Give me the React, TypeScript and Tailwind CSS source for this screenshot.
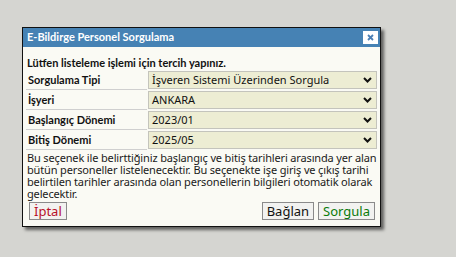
import React from "react";

const font = { fontFamily: '"Noto Sans", "DejaVu Sans", sans-serif' };
const boldFont = { fontFamily: 'Lato, "Noto Sans", sans-serif' };

function Chevron() {
  return (
    <svg width="9" height="6" viewBox="0 0 9 6" className="shrink-0">
      <path d="M1 1 L4.5 4.5 L8 1" stroke="#111" strokeWidth="2" fill="none" />
    </svg>
  );
}

function Row({ label, value }: { label: string; value: string }) {
  return (
    <div className="flex h-[20px] gap-[1px]">
      <div
        className="w-[121px] h-[19px] border-b border-[#cfcfcf] font-bold text-[11px] leading-[18px] pl-[2px] text-[#111]"
        style={boldFont}
      >
        {label}
      </div>
      <div className="flex-1 h-[18px] bg-[#ededd3] border border-[#c4c4bc] flex items-center justify-between pl-[3px] pr-[4px] text-[11px] text-[#111]">
        <span>{value}</span>
        <Chevron />
      </div>
    </div>
  );
}

function Btn({ children, color }: { children: React.ReactNode; color: string }) {
  return (
    <div
      className={`h-[18px] px-[4px] border border-[#8a8a8a] bg-[#f2f2f0] text-[13px] leading-[16px] flex items-center ${color}`}
    >
      {children}
    </div>
  );
}

export default function App() {
  return (
    <div className="w-[456px] h-[257px] bg-[#d5d5d1] pt-[27px] pl-[22px]" style={font}>
      <div className="w-[359px] h-[200px] border border-[#111] bg-[#fafaf4] shadow-[3px_3px_3px_rgba(0,0,0,0.55)] flex flex-col">
        <div className="h-[19px] bg-[#4682b4] flex items-center justify-between pl-[4px] pr-[2px]">
          <span className="text-white font-bold text-[11px]" style={boldFont}>
            E-Bildirge Personel Sorgulama
          </span>
          <div className="w-[15px] h-[13px] bg-white flex items-center justify-center">
            <svg width="7" height="7" viewBox="0 0 7 7">
              <path d="M1 1 L6 6 M6 1 L1 6" stroke="#4a7fb5" strokeWidth="1.8" />
            </svg>
          </div>
        </div>
        <div className="flex-1 flex flex-col px-[3px] pt-[9px]">
          <div
            className="font-bold text-[11px] leading-[13px] pl-[1px] text-[#111] mb-[2px]"
            style={boldFont}
          >
            Lütfen listeleme işlemi için tercih yapınız.
          </div>
          <Row label="Sorgulama Tipi" value="İşveren Sistemi Üzerinden Sorgula" />
          <Row label="İşyeri" value="ANKARA" />
          <Row label="Başlangıç Dönemi" value="2023/01" />
          <Row label="Bitiş Dönemi" value="2025/05" />
          <div className="text-[11px] leading-[12px] tracking-[-0.15px] text-[#1a1a1a] pl-[1px] mt-[1px]">
            Bu seçenek ile belirttiğiniz başlangıç ve bitiş tarihleri arasında yer alan bütün personeller
            listelenecektir. Bu seçenekte işe giriş ve çıkış tarihi belirtilen tarihler arasında olan
            personellerin bilgileri otomatik olarak gelecektir.
          </div>
          <div className="flex items-center justify-between mt-[2px] pl-[3px] pr-[2px]">
            <Btn color="text-[#b8102a]">İptal</Btn>
            <div className="flex gap-[4px]">
              <Btn color="text-[#111]">Bağlan</Btn>
              <Btn color="text-[#0a7a0a]">Sorgula</Btn>
            </div>
          </div>
        </div>
      </div>
    </div>
  );
}
